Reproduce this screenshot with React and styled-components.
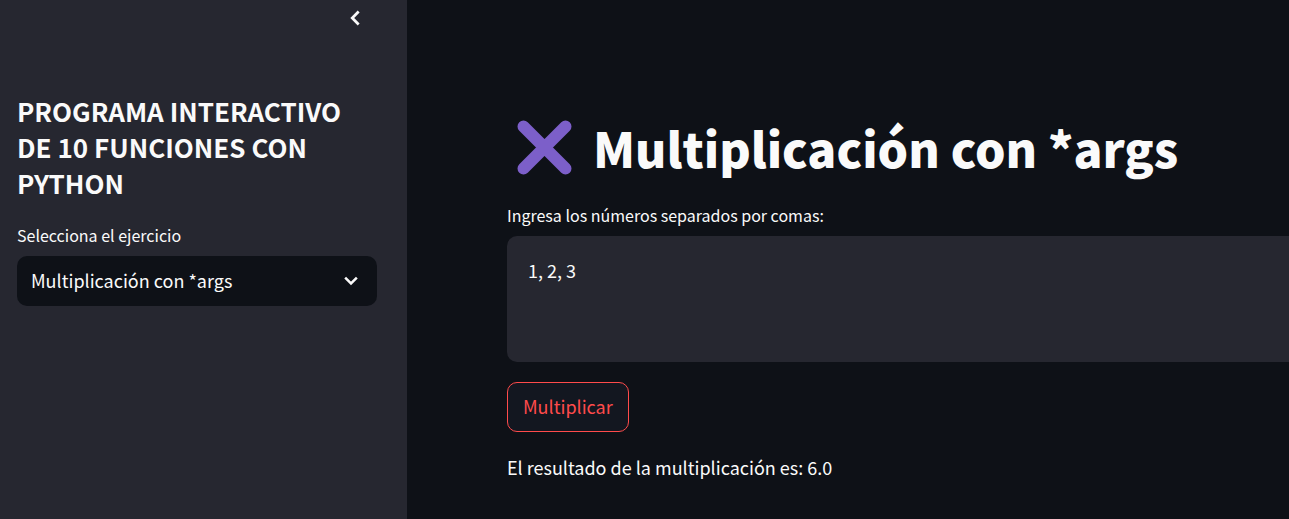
import React, { useState } from "react";
import styled, { createGlobalStyle } from "styled-components";

const GlobalStyle = createGlobalStyle`
  *, *::before, *::after { box-sizing: border-box; }
  body {
    margin: 0;
    background: #0e1117;
    color: #fafafa;
    font-family: "Noto Sans CJK SC", "Noto Sans", sans-serif;
    font-size: 18px;
    line-height: 32px;
  }
  button, select, textarea { font: inherit; color: inherit; }
`;

const Layout = styled.div`
  display: flex;
  min-height: 100vh;
`;

const Sidebar = styled.aside`
  flex: 0 0 407px;
  padding: 0 30px 40px 17px;
  background: #262730;
`;

const SidebarHeader = styled.div`
  display: flex;
  justify-content: flex-end;
  height: 93px;
  padding: 6px 10px 0 0;
`;

const IconButton = styled.button`
  display: flex;
  align-items: center;
  justify-content: center;
  width: 24px;
  height: 24px;
  padding: 0;
  border: 0;
  background: none;
  cursor: pointer;
`;

const SidebarTitle = styled.h2`
  margin: 0 0 24px;
  font-size: 26px;
  font-weight: 700;
  line-height: 36px;
`;

const Label = styled.label`
  display: block;
  margin-bottom: 11px;
  font-size: 16px;
  line-height: 20px;
`;

const SelectBox = styled.div`
  display: grid;
  align-items: center;

  > * { grid-area: 1 / 1; }
  > svg { justify-self: end; margin-right: 16px; pointer-events: none; }
`;

const Select = styled.select`
  width: 100%;
  height: 50px;
  padding: 0 40px 2px 14px;
  border: 0;
  border-radius: 10px;
  appearance: none;
  background: #0e1117;
`;

const Main = styled.main`
  flex: 1;
  min-width: 0;
  padding: 113px 0 32px 100px;
`;

const Title = styled.h1`
  display: flex;
  align-items: center;
  gap: 20px;
  margin: 0 0 24px;
  padding-left: 9px;
  font-size: 48px;
  font-weight: 900;
  line-height: 68px;
`;

const TextArea = styled.textarea`
  display: block;
  width: 100%;
  height: 126px;
  margin-bottom: 20px;
  padding: 18px 21px;
  border: 0;
  border-radius: 10px 0 0 10px;
  resize: none;
  background: #262730;
`;

const ActionButton = styled.button`
  display: block;
  height: 50px;
  margin-bottom: 19px;
  padding: 0 15px 2px;
  border: 1px solid #ff4b4b;
  border-radius: 10px;
  background: #131720;
  color: #ff4b4b;
  cursor: pointer;
`;

const Result = styled.p`
  margin: 0;
`;

function Chevron({ direction, size }) {
  const points = direction === "left" ? "16 5 9 12 16 19" : "5 8 12 15 19 8";
  return (
    <svg width={size} height={size} viewBox="0 0 24 24" fill="none" stroke="#fafafa" strokeWidth="3" aria-hidden="true">
      <polyline points={points} />
    </svg>
  );
}

function TimesIcon() {
  return (
    <svg width="57" height="57" viewBox="0 0 57 57" stroke="#7c5fc9" strokeWidth="12" strokeLinecap="round" aria-hidden="true">
      <path d="M7.5 7.5 49.5 49.5M49.5 7.5 7.5 49.5" />
    </svg>
  );
}

export default function App() {
  const [numbers, setNumbers] = useState("1, 2, 3");
  const [result, setResult] = useState("6.0");

  const multiply = () => {
    const product = numbers.split(",").reduce((total, n) => total * Number(n), 1);
    setResult(Number.isInteger(product) ? product.toFixed(1) : String(product));
  };

  return (
    <>
      <GlobalStyle />
      <Layout>
        <Sidebar>
          <SidebarHeader>
            <IconButton type="button" aria-label="Cerrar barra lateral">
              <Chevron direction="left" size={22} />
            </IconButton>
          </SidebarHeader>
          <SidebarTitle>PROGRAMA INTERACTIVO DE 10 FUNCIONES CON PYTHON</SidebarTitle>
          <Label htmlFor="exercise">Selecciona el ejercicio</Label>
          <SelectBox>
            <Select id="exercise">
              <option>Multiplicación con *args</option>
            </Select>
            <Chevron direction="down" size={20} />
          </SelectBox>
        </Sidebar>
        <Main>
          <Title>
            <TimesIcon />
            Multiplicación con *args
          </Title>
          <Label htmlFor="numbers">Ingresa los números separados por comas:</Label>
          <TextArea id="numbers" value={numbers} onChange={(e) => setNumbers(e.target.value)} />
          <ActionButton type="button" onClick={multiply}>Multiplicar</ActionButton>
          <Result>El resultado de la multiplicación es: {result}</Result>
        </Main>
      </Layout>
    </>
  );
}
